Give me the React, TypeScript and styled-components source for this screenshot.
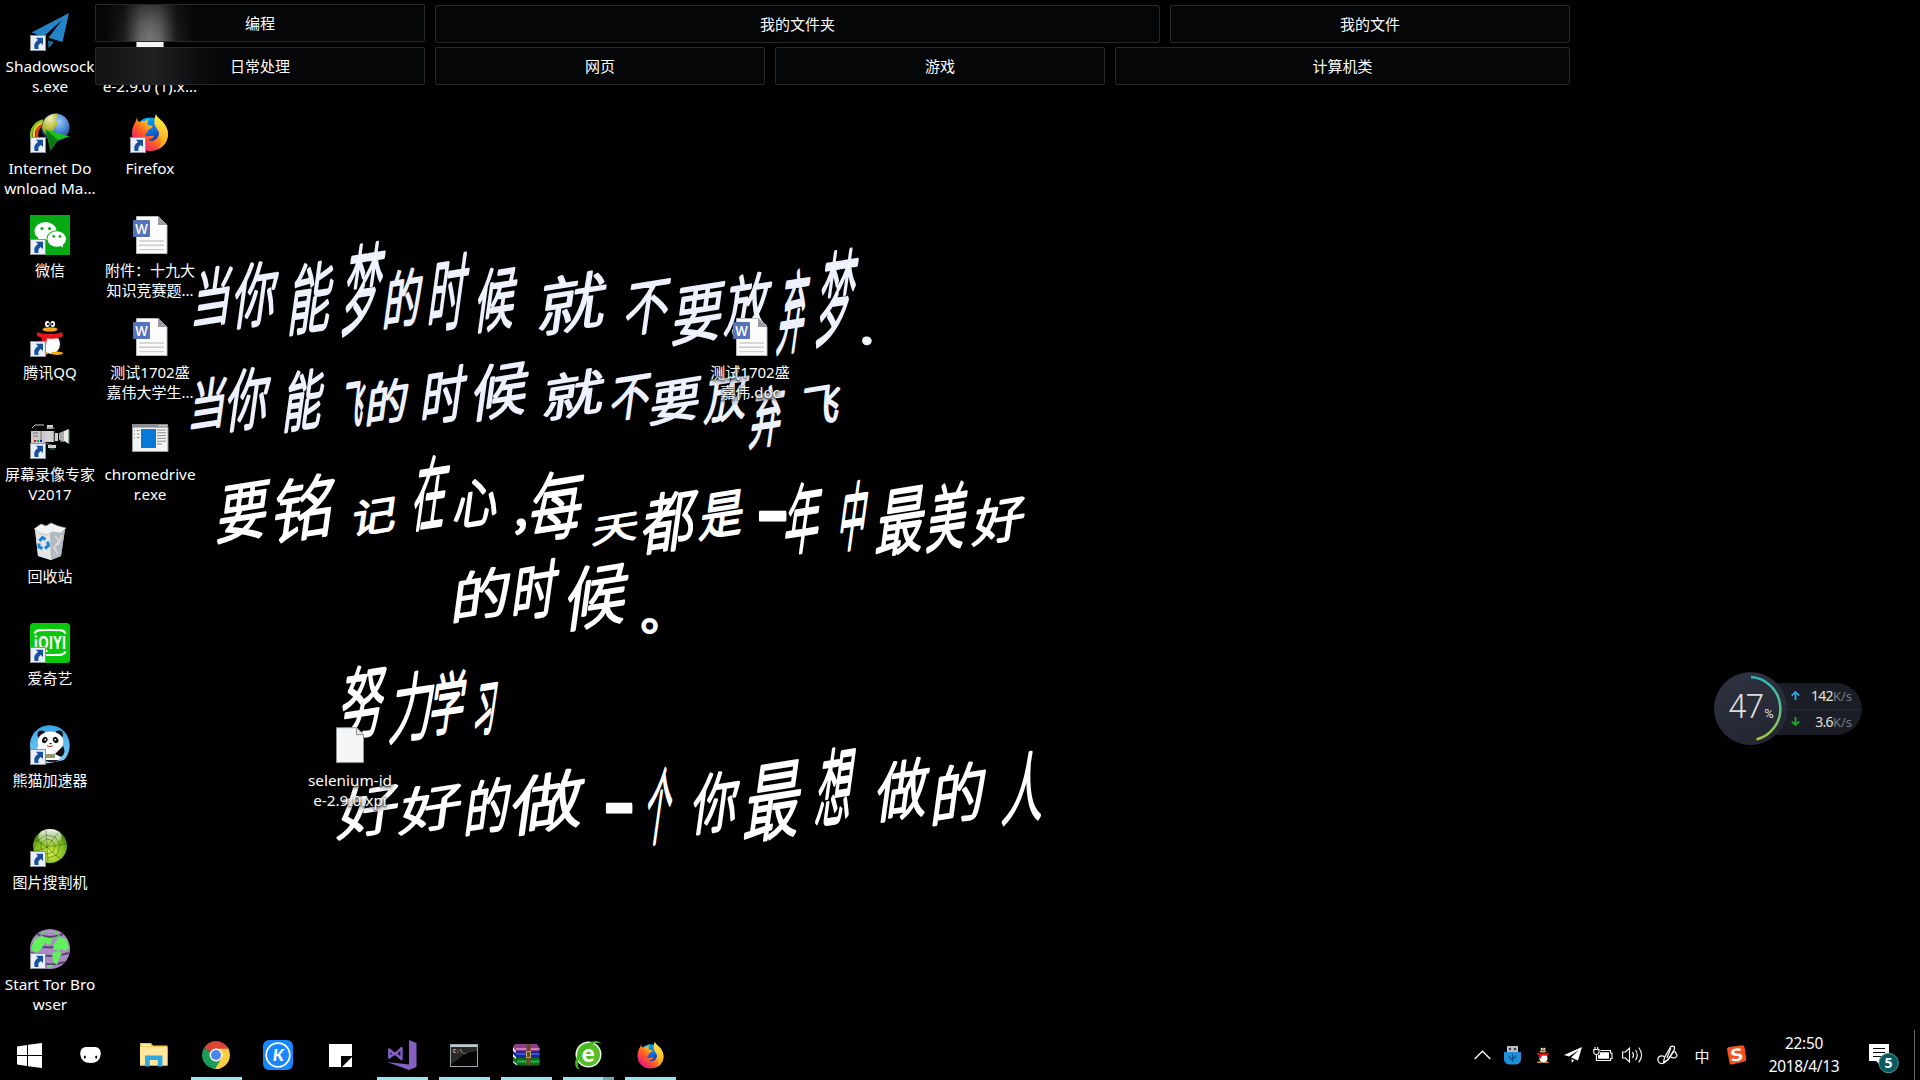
import React from 'react';
import styled, { createGlobalStyle } from 'styled-components';

const UI_FONT = "'Noto Sans', 'Noto Sans CJK SC', sans-serif";

const GlobalStyle = createGlobalStyle`
  html, body { margin: 0; padding: 0; background: #000; overflow: hidden; }
  * { box-sizing: border-box; }
  svg { overflow: visible; }
`;

const Screen = styled.div`
  position: relative;
  display: flex;
  flex-direction: column;
  width: 1920px;
  height: 1080px;
  background: #000;
  color: #fff;
  font-family: ${UI_FONT};
  font-size: 15px;
  overflow: hidden;
`;

/* ---------- wallpaper ---------- */

const WallpaperLayer = styled.svg`
  position: absolute;
  left: 0;
  top: 0;
  font-family: 'Noto Sans CJK SC', sans-serif;
  font-weight: 300;
  font-size: 100px;
`;

// character, left, top, right, bottom
type Glyph = [string, number, number, number, number];

const verses: Glyph[][] = [
  [
    ['当', 193, 263, 234, 329], ['你', 230, 257, 282, 331], ['能', 287, 257, 338, 337], ['梦', 339, 239, 389, 338],
    ['的', 383, 265, 425, 330], ['时', 427, 250, 473, 334], ['候', 473, 263, 521, 335], ['就', 537, 266, 611, 338],
    ['不', 623, 277, 673, 338], ['要', 671, 280, 727, 347], ['放', 723, 269, 775, 337], ['弃', 775, 266, 813, 356],
    ['梦', 813, 246, 862, 349], ['.', 862, 336, 872, 345],
  ],
  [
    ['当', 190, 374, 228, 432], ['你', 223, 363, 274, 434], ['能', 282, 365, 328, 434], ['飞', 340, 380, 368, 429],
    ['的', 366, 375, 410, 427], ['时', 421, 362, 470, 427], ['候', 470, 357, 532, 424], ['就', 542, 364, 608, 423],
    ['不', 609, 372, 653, 423], ['要', 649, 375, 703, 427], ['放', 703, 364, 752, 425], ['弃', 748, 382, 787, 450],
    ['飞', 799, 382, 843, 428],
  ],
  [
    ['要', 216, 478, 272, 545], ['铭', 270, 470, 337, 546], ['记', 351, 493, 399, 538], ['在', 410, 452, 453, 533],
    ['心', 452, 474, 502, 530], [',', 515, 518, 526, 536], ['每', 527, 465, 588, 545], ['天', 592, 510, 640, 547],
    ['都', 639, 485, 700, 557], ['是', 698, 487, 747, 542], ['一', 758, 512, 787, 521], ['年', 782, 478, 826, 557],
    ['中', 837, 478, 871, 553], ['最', 874, 483, 930, 559], ['美', 925, 478, 972, 554], ['好', 971, 491, 1028, 548],
  ],
  [
    ['的', 453, 563, 512, 624], ['时', 512, 556, 562, 623], ['候', 563, 558, 632, 634], ['。', 641, 618, 658, 634],
  ],
  [
    ['努', 337, 660, 390, 743], ['力', 388, 667, 438, 746], ['学', 428, 667, 470, 737], ['习', 473, 682, 499, 737],
  ],
  [
    ['好', 336, 778, 402, 842], ['好', 398, 778, 465, 837], ['的', 465, 774, 513, 837], ['做', 508, 765, 588, 839],
    ['一', 605, 804, 633, 813], ['个', 642, 765, 678, 846], ['你', 689, 767, 743, 837], ['最', 742, 757, 807, 845],
    ['想', 813, 743, 859, 828], ['做', 873, 754, 933, 825], ['的', 932, 758, 988, 827], ['人', 1001, 748, 1051, 827],
  ],
];

const LEAN = 8;
const RISE = 9;
const PEN = 2.6;
const slope = (deg: number) => Math.tan((deg * Math.PI) / 180);
const measurer = document.createElement('canvas').getContext('2d')!;

/** Stretches and slants one character so that its ink fills the given box. */
function penStroke([char, left, top, right, bottom]: Glyph) {
  measurer.font = "300 100px 'Noto Sans CJK SC'";
  const m = measurer.measureText(char);
  const width = right - left;
  const height = bottom - top;
  const flat = height < 20;
  const lean = flat ? 0 : LEAN;
  const rise = flat ? 0 : RISE;
  const h = height - width * slope(rise);
  const w = width - h * slope(lean);
  const inkW = m.actualBoundingBoxRight + m.actualBoundingBoxLeft;
  const inkH = m.actualBoundingBoxAscent + m.actualBoundingBoxDescent;
  const sx = Math.max(w - PEN, 4) / inkW;
  const sy = Math.max(h - PEN, 4) / inkH;
  return {
    transform: `translate(${left + PEN / 2} ${bottom - PEN / 2}) skewY(${-rise}) skewX(${-lean}) scale(${sx} ${sy}) translate(${m.actualBoundingBoxLeft} ${-m.actualBoundingBoxDescent})`,
    strokeWidth: PEN / Math.sqrt(sx * sy),
  };
}

function Wallpaper() {
  return (
    <WallpaperLayer width="1920" height="1080" viewBox="0 0 1920 1080">
      {verses.map((verse, v) => (
        <g key={v} fill="#fff" stroke={v < 2 ? '#edf0fd' : '#fff'} strokeLinejoin="round">
          {verse.map((glyph, i) => (
            <text key={i} {...penStroke(glyph)}>{glyph[0]}</text>
          ))}
        </g>
      ))}
    </WallpaperLayer>
  );
}

/* ---------- shared brand drawings ---------- */

const Firefox = ({ id, size }: { id: string; size: number }) => (
  <svg width={size} height={size} viewBox="0 0 40 40">
    <defs>
      <linearGradient id={`${id}a`} x1="0.9" y1="0.1" x2="0.15" y2="0.9">
        <stop offset="0" stopColor="#fff44f" /><stop offset=".35" stopColor="#ffb81c" />
        <stop offset=".62" stopColor="#ff5a26" /><stop offset="1" stopColor="#e31587" />
      </linearGradient>
      <linearGradient id={`${id}b`} x1="0.2" y1="0" x2="0.7" y2="1">
        <stop offset="0" stopColor="#00b3f4" /><stop offset=".5" stopColor="#0a6fe0" /><stop offset="1" stopColor="#33107c" />
      </linearGradient>
      <linearGradient id={`${id}c`} x1="0" y1="0" x2="0" y2="1">
        <stop offset="0" stopColor="#fff04a" /><stop offset="1" stopColor="#ff9d12" />
      </linearGradient>
    </defs>
    <circle cx="20" cy="19.5" r="15" fill={`url(#${id}b)`} />
    <path d="M7 4C7 7 8 8 9 9C11 8 13 8 15 8C17 6 18 6 19 6C17 8 17 10 18 12L23 13C22 15 20 16 18 17C18 20 16 20 15 22C17 25 21 22 24 23C22 27 17 27 17 26C21 30 29 27 29 20C29 14 25 13 24 10L32 8C36 13 38 16 38 21C38 31 30 38 20 38C10 38 2 31 2 20C2 15 4 11 6 8Z" fill={`url(#${id}a)`} />
    <path d="M26 1C27 5 34 8 36 14C40 23 37 32 28 36C32 31 32 25 29 19C26 14 22 10 26 1Z" fill={`url(#${id}c)`} />
  </svg>
);

const Penguin = ({ size }: { size: number }) => (
  <svg width={size} height={size} viewBox="0 0 40 40">
    <ellipse cx="20" cy="12" rx="9" ry="10" fill="#0a0a0a" />
    <ellipse cx="20" cy="25" rx="12" ry="12" fill="#0a0a0a" />
    <ellipse cx="21" cy="27" rx="9" ry="10" fill="#fff" />
    <ellipse cx="17.3" cy="7" rx="2.3" ry="3" fill="#fff" /><ellipse cx="22.8" cy="7" rx="2.3" ry="3" fill="#fff" />
    <circle cx="18" cy="7.2" r="1.1" fill="#000" /><circle cx="22.2" cy="7.2" r="1.1" fill="#000" />
    <ellipse cx="20" cy="12.4" rx="7.5" ry="2.2" fill="#f6a81a" />
    <path d="M7 15C15 18 25 18 32 15L33 19C29 22 24 22 17 21.5L16 28L11 27L12 21L7 19Z" fill="#e8141c" />
    <ellipse cx="12" cy="36.3" rx="6" ry="1.7" fill="#f6a81a" /><ellipse cx="27" cy="36.3" rx="6" ry="1.7" fill="#f6a81a" />
  </svg>
);

/* ---------- desktop icons ---------- */

const Svg40 = ({ children }: { children: React.ReactNode }) => (
  <svg width="40" height="40" viewBox="0 0 40 40">{children}</svg>
);

const PaperPlaneArt = () => (
  <Svg40>
    <path d="M39 2L1.5 21.5L13 26L32 9L18.5 26.8L32.5 31Z" fill="#2484c6" />
    <path d="M18 29.5L24 31.2L18.6 37Z" fill="#1c6ca6" />
  </Svg40>
);

const DownloadManagerArt = () => (
  <Svg40>
    <defs>
      <radialGradient id="idmGlobe" cx=".6" cy=".3" r=".75">
        <stop offset="0" stopColor="#a9cdfa" /><stop offset=".45" stopColor="#4a86da" /><stop offset="1" stopColor="#0b2658" />
      </radialGradient>
      <radialGradient id="idmLand" cx=".5" cy=".2" r=".9">
        <stop offset="0" stopColor="#f4f0c0" /><stop offset=".5" stopColor="#c2c444" /><stop offset="1" stopColor="#6a8a22" />
      </radialGradient>
    </defs>
    <path d="M13 7.5C4 10 -1 18 2 27" fill="none" stroke="#7fc62b" strokeWidth="2.4" />
    <path d="M13.5 9.5C6 12 2 18 4.5 27" fill="none" stroke="#f5d21d" strokeWidth="2.4" />
    <path d="M14 11.5C9 13 5 18 7.5 27" fill="none" stroke="#e2451c" strokeWidth="2.8" />
    <circle cx="25.5" cy="14.5" r="14" fill="url(#idmGlobe)" />
    <path d="M13 10C15 4 21 .6 27 .8C29 3 26 5 26 8C28 9 28 12 25 14C24 18 19 21 17 22C12 19 11 14 13 10Z" fill="url(#idmLand)" />
    <path d="M15.5 16.5L39.5 23.5L28 27L20.5 37.5Z" fill="#19c219" />
    <path d="M15.5 16.5L28 27L20.5 37.5Z" fill="#0c7a12" />
  </Svg40>
);

const WeChatArt = () => (
  <Svg40>
    <rect width="40" height="40" fill="#06ab13" />
    <ellipse cx="15.5" cy="16" rx="11" ry="9" fill="#fff" />
    <path d="M8 22L8 28L14 24Z" fill="#fff" />
    <ellipse cx="26.7" cy="24" rx="10.2" ry="8.7" fill="#06ab13" />
    <ellipse cx="26.7" cy="24" rx="9.3" ry="7.8" fill="#fff" />
    <path d="M29 30L33 32.5L32.5 28Z" fill="#fff" />
    <circle cx="12" cy="13.5" r="1.6" fill="#06ab13" /><circle cx="19.6" cy="13.5" r="1.6" fill="#06ab13" />
    <circle cx="23.7" cy="21.4" r="1.3" fill="#06ab13" /><circle cx="30" cy="21.4" r="1.3" fill="#06ab13" />
  </Svg40>
);

const CameraArt = () => (
  <Svg40>
    <path d="M2 9L5 6H14" fill="none" stroke="#ccc" strokeWidth="1" />
    <path d="M1 12H15V27H1Z" fill="#c9c9c9" /><path d="M3 14H8M3 17H8M11 12V22" stroke="#777" strokeWidth="1" />
    <rect x="4" y="21" width="2" height="2" fill="#e00" /><rect x="7" y="21" width="2" height="2" fill="#0b0" /><rect x="10" y="21" width="2" height="2" fill="#11f" />
    <path d="M17 6H23V10H17ZM15 12H24V23H15ZM18 26H26V29H18ZM25 14H28V22H25Z" fill="#d2d2d2" />
    <path d="M16 9L25 9M15 24L22 26M24 12L24 23" stroke="#777" strokeWidth="1" />
    <path d="M29 14L34 12V23L29 21Z" fill="#aaa" /><path d="M34 12L39 10V25L34 22Z" fill="#e9e9e9" />
    <path d="M30 22L33 23M20 30H25M39 11V25" stroke="#3f7f46" strokeWidth="1" />
  </Svg40>
);

const RecycleBinArt = () => (
  <Svg40>
    <path d="M5 8L35 8L31 35L21 39L8 35Z" fill="#c9cdd1" />
    <path d="M5 8L20 12L21 39L8 35Z" fill="#e2e5e8" /><path d="M35 8L20 12L21 39L31 35Z" fill="#b5babf" />
    <path d="M4 8L11 3L16 5L21 2L28 5L36 7L31 12L22 11L17 14L10 12Z" fill="#f2f3f4" stroke="#a6abb0" strokeWidth=".6" />
    <path d="M25 15L29 20L24 27L28 33M32 14L28 24" stroke="#d9dcdf" strokeWidth="1.6" fill="none" />
    <g fill="none" stroke="#1b83d6" strokeWidth="3">
      <path d="M9.5 20L12.5 16.5L15.5 18.5" /><path d="M17.5 20.5L18.5 24.5L15 27.5" /><path d="M12.5 27.5L9 26L9 22.5" />
    </g>
  </Svg40>
);

const IqiyiArt = () => (
  <Svg40>
    <rect width="40" height="40" rx="3.5" fill="#09c80c" />
    <path d="M4.5 10.5C6 7 8 7 20 7S34 7 35.5 10.5M4.5 28.5C6 32 8 32 20 32S34 32 35.5 28.5" fill="none" stroke="#fff" strokeWidth="2.2" />
    <text x="3.8" y="25.5" textLength="32.5" lengthAdjust="spacingAndGlyphs" fill="#fff" fontFamily="'Open Sans', sans-serif" fontWeight="700" fontSize="17">iQIYI</text>
  </Svg40>
);

const PandaArt = () => (
  <Svg40>
    <defs>
      <linearGradient id="pandaSky" x1="0" y1="0" x2="0" y2="1"><stop offset="0" stopColor="#3aa4e8" /><stop offset="1" stopColor="#7ed1fa" /></linearGradient>
    </defs>
    <path d="M34 35C43 25 41 10 30 3C16 -5 0 5 0 20C0 32 10 40 20 38Z" fill="url(#pandaSky)" />
    <ellipse cx="20" cy="26" rx="13" ry="11.5" fill="#fff" />
    <circle cx="11.5" cy="9.5" r="4" fill="#111" /><circle cx="29" cy="9.5" r="4" fill="#111" />
    <ellipse cx="20.5" cy="17" rx="12.8" ry="10.5" fill="#fff" />
    <ellipse cx="14.8" cy="15" rx="2.6" ry="3.3" fill="#111" transform="rotate(30 14.8 15)" /><ellipse cx="25.6" cy="15" rx="2.6" ry="3.3" fill="#111" transform="rotate(-30 25.6 15)" />
    <circle cx="15.3" cy="14.6" r=".9" fill="#fff" /><circle cx="25.2" cy="14.6" r=".9" fill="#fff" />
    <path d="M19 18H22L20.5 19.5Z" fill="#111" /><path d="M17 20.5Q20 23 23 20.5" stroke="#d22" fill="none" />
    <path d="M25 29L33 21Q37 28 31 32Z" fill="#111" /><path d="M16 29H25V33H16Z" fill="#8d9a72" /><path d="M18 30h2v2h-2z" fill="#e0803a" /><path d="M14 35Q22 40 29 35Z" fill="#222" />
  </Svg40>
);

const WebBallArt = () => (
  <Svg40>
    <defs>
      <radialGradient id="webBall" cx=".5" cy=".7" r=".6"><stop offset="0" stopColor="#d6ee48" /><stop offset=".7" stopColor="#80bb1e" /><stop offset="1" stopColor="#4a8a14" /></radialGradient>
      <linearGradient id="webShine" x1="0" y1="0" x2="0" y2="1"><stop offset="0" stopColor="#fff" stopOpacity=".95" /><stop offset="1" stopColor="#fff" stopOpacity=".15" /></linearGradient>
    </defs>
    <circle cx="20" cy="19" r="17" fill="url(#webBall)" />
    <ellipse cx="20" cy="9.5" rx="11.5" ry="7.5" fill="url(#webShine)" />
    <path d="M17 20L4 12M17 20L16 3M17 20L28 6M17 20L36 17M17 20L30 32M17 20L18 35M17 20L4 25M11 16L16.5 12L22 13.5L25 18.5L23 25L17 27L11 22ZM7 14L16 8L25 10L30 18L27 28L17.5 31" fill="none" stroke="#26400c" strokeWidth=".7" strokeOpacity=".6" />
  </Svg40>
);

const TorArt = () => (
  <Svg40>
    <circle cx="20" cy="20" r="20" fill="#a88bc0" />
    <path d="M7 5Q20 11 33 5M2 15Q20 22 38 15M1 24Q20 30 39 24M5 33Q20 38 35 33" stroke="#604077" strokeWidth="2" fill="none" />
    <ellipse cx="20" cy="6" rx="9" ry="3.5" fill="none" stroke="#5be45e" strokeWidth="1.2" />
    <path d="M5 10L12 7L17 9L22 9L21 14L18 16L15 13L12 19L9 22L6 24L2 21L2 16Z" fill="#63f05f" />
    <path d="M24 15L29 8L36 10L39 18L36 22L32 20L29 22L23 20Z" fill="#63f05f" />
    <path d="M22 24L29 22L32 25L29 29L27 36L23 33Z" fill="#63f05f" />
    <path d="M16 36H24L20 39Z" fill="#63f05f" />
  </Svg40>
);

const WordDocArt = () => (
  <Svg40>
    <path d="M6.5 1.5H28L37 10V38.5H6.5Z" fill="#fcfcfd" stroke="#b8b8bb" />
    <path d="M28 1L37.4 10H28Z" fill="#9b9ca3" />
    <path d="M9 26H34M9 30.3H34M9 34.6H34" stroke="#cbcccd" strokeWidth="1.4" />
    <rect x="3" y="5" width="17" height="17" rx="1" fill="#5672b8" />
    <text x="11.5" y="18.5" textAnchor="middle" textLength="12.5" lengthAdjust="spacingAndGlyphs" fontFamily="'Open Sans', sans-serif" fontWeight="600" fontSize="14" fill="#fff">W</text>
  </Svg40>
);

const ExeArt = () => (
  <Svg40>
    <rect x="2" y="5" width="36" height="28" fill="#f4f4f4" /><rect x="2" y="5" width="36" height="3.6" fill="#8b8d90" />
    <path d="M29 6.7h2M32.3 6.7h2M35.4 6.7h1.6" stroke="#fff" />
    <rect x="11" y="10" width="15" height="19" fill="#0a78d7" />
    <path d="M4 11.5h1M7 11.5h2.5M4 15h1M7 15h2.5M4 18.5h1M7 18.5h2.5" stroke="#888" />
    <path d="M27 11h9M27 13.8h9M27 16.6h9M27 19.4h9M27 22.2h9M27 25h5" stroke="#8a8a8a" />
    <path d="M2 32.5H38V8M2.5 8V32.5" fill="none" stroke="#9a9a9a" />
  </Svg40>
);

const BlankFileArt = () => (
  <Svg40>
    <path d="M6.5 2.7H26.5L33.5 9.7V37.6H6.5Z" fill="#f3f5f7" stroke="#8f9194" />
    <path d="M26.5 2.7V9.7H33.5" fill="#e2e4e6" stroke="#8f9194" />
  </Svg40>
);

const ShortcutBadge = () => (
  <svg width="16" height="16" viewBox="0 0 16 16">
    <rect x=".5" y=".5" width="15" height="15" fill="#e9effa" stroke="#8d9094" />
    <path d="M5.8 2.8H13V10L10.8 8Q7.3 10 8.6 14H4.6Q3 8 8 5Z" fill="#174f9b" />
  </svg>
);

const IconGrid = styled.main`
  position: relative;
  display: grid;
  grid-template-columns: repeat(19, 100px);
  grid-template-rows: repeat(10, 102px);
  height: 1030px;
`;

const IconCell = styled.div<{ $col: number; $row: number }>`
  grid-column: ${(p) => p.$col + 1};
  grid-row: ${(p) => p.$row + 1};
  display: flex;
  flex-direction: column;
  align-items: center;
  padding-top: 11px;
`;

const IconArt = styled.div`
  position: relative;
  width: 40px;
  height: 40px;
  svg { display: block; }
`;

const BadgeSpot = styled.div`
  position: absolute;
  left: 0;
  bottom: 0;
`;

const IconLabel = styled.div`
  margin-top: 5px;
  font-size: 15px;
  line-height: 20px;
  text-align: center;
  white-space: pre;
  text-shadow: 0 1px 2px #000, 1px 2px 4px rgba(0, 0, 0, 0.9);
`;

const LatinLabel = styled(IconLabel)`
  font-size: 15.3px;
`;

type DesktopItem = { col: number; row: number; label: string; art: React.ReactNode; shortcut?: boolean };

const desktopItems: DesktopItem[] = [
  { col: 0, row: 0, label: 'Shadowsock\ns.exe', art: <PaperPlaneArt />, shortcut: true },
  { col: 0, row: 1, label: 'Internet Do\nwnload Ma...', art: <DownloadManagerArt />, shortcut: true },
  { col: 0, row: 2, label: '微信', art: <WeChatArt />, shortcut: true },
  { col: 0, row: 3, label: '腾讯QQ', art: <Penguin size={40} />, shortcut: true },
  { col: 0, row: 4, label: '屏幕录像专家\nV2017', art: <CameraArt />, shortcut: true },
  { col: 0, row: 5, label: '回收站', art: <RecycleBinArt /> },
  { col: 0, row: 6, label: '爱奇艺', art: <IqiyiArt />, shortcut: true },
  { col: 0, row: 7, label: '熊猫加速器', art: <PandaArt />, shortcut: true },
  { col: 0, row: 8, label: '图片搜割机', art: <WebBallArt />, shortcut: true },
  { col: 0, row: 9, label: 'Start Tor Bro\nwser', art: <TorArt />, shortcut: true },
  { col: 1, row: 0, label: 'selenium-id\ne-2.9.0 (1).x...', art: <BlankFileArt /> },
  { col: 1, row: 1, label: 'Firefox', art: <Firefox id="ffDesk" size={40} />, shortcut: true },
  { col: 1, row: 2, label: '附件：十九大\n知识竞赛题...', art: <WordDocArt /> },
  { col: 1, row: 3, label: '测试1702盛\n嘉伟大学生...', art: <WordDocArt /> },
  { col: 1, row: 4, label: 'chromedrive\nr.exe', art: <ExeArt /> },
  { col: 7, row: 3, label: '测试1702盛\n嘉伟.doc', art: <WordDocArt /> },
  { col: 3, row: 7, label: 'selenium-id\ne-2.9.0.xpi', art: <BlankFileArt /> },
];

const hasHan = (text: string) => /[\u4e00-\u9fff]/.test(text);

/* ---------- rolled-up folders along the top ---------- */

const FenceDock = styled.nav`
  position: absolute;
  left: 95px;
  top: 4px;
  display: flex;
  flex-direction: column;
  gap: 4px;
  width: 1475px;
`;

const FenceRow = styled.div`
  display: flex;
  gap: 10px;
  height: 39px;
`;

const Fence = styled.div<{ $width: number; $glow?: string; $drop?: number }>`
  display: flex;
  align-items: center;
  justify-content: center;
  width: ${(p) => p.$width}px;
  height: 38px;
  margin-top: ${(p) => p.$drop ?? 0}px;
  border: 1px solid #29292b;
  border-radius: 2px;
  background: ${(p) => (p.$glow ? `${p.$glow}, ` : '')}#050608;
  line-height: 20px;
  text-shadow: 0 1px 3px #000;
`;

const fileGlow =
  'linear-gradient(180deg, rgba(5,6,8,.55), rgba(5,6,8,.2) 50%, transparent), linear-gradient(90deg, transparent 10px, rgba(70,70,72,.35) 28px, #68696b 44px, #77787a 54px, #68696b 64px, rgba(70,70,72,.35) 80px, transparent 98px)';
const labelGlow = 'linear-gradient(90deg, #111213 0, #1f2021 55px, #18191a 75px, #0c0d0e 100px, #050608 125px)';

/* ---------- speed meter ---------- */

const Meter = styled.aside`
  position: absolute;
  left: 1714px;
  top: 672px;
  display: flex;
  align-items: center;
`;

const MeterDial = styled.div`
  position: relative;
  z-index: 1;
  display: flex;
  align-items: center;
  justify-content: center;
  width: 73px;
  height: 73px;
  border-radius: 50%;
  background: linear-gradient(160deg, #2f3342, #22252f);
  border: 1px solid #2c303c;
  color: #dcdcdc;
`;

const DialArc = styled.svg`
  position: absolute;
  inset: -1px;
`;

const DialNumber = styled.span`
  font: 300 33px/36px Roboto, sans-serif;
  letter-spacing: -0.8px;
  margin: -4px 0 0 1px;
`;

const DialUnit = styled.span`
  font: 13px/14px Roboto, sans-serif;
  padding-top: 10px;
  margin-left: 1px;
`;

const MeterRates = styled.div`
  display: flex;
  flex-direction: column;
  width: 104px;
  height: 52px;
  margin-left: -29px;
  padding-left: 28px;
  border-radius: 0 26px 26px 0;
  background: #1a1d26;
`;

const Rate = styled.div`
  display: flex;
  align-items: center;
  justify-content: space-between;
  height: 26px;
  padding: 1px 10px 0 0;
  font: 14px/25px 'Noto Sans', sans-serif;
  letter-spacing: -0.7px;
  color: #e6e0da;
  & + & { border-top: 1px solid #262932; padding-top: 0; }
  svg { margin: -2px 0 0 5px; }
`;

const RateUnit = styled.span`
  color: #777a83;
  letter-spacing: 0;
  font-size: 13px;
`;

/* ---------- taskbar ---------- */

const Taskbar = styled.footer`
  position: relative;
  display: flex;
  justify-content: space-between;
  height: 50px;
  background: #000;
`;

const TaskGroup = styled.div`
  display: flex;
`;

const TaskButton = styled.div<{ $width: number; $open?: boolean; $stacked?: boolean }>`
  display: flex;
  flex-direction: column;
  align-items: center;
  justify-content: center;
  width: ${(p) => p.$width}px;
  height: 50px;
  padding-top: 3px;
  &::after {
    content: '';
    width: 51px;
    height: 3px;
    margin-top: auto;
    background: ${(p) => (!p.$open ? 'transparent' : p.$stacked ? 'linear-gradient(90deg, #9ce3f1 40px, #76a8b3 40px)' : '#9ce3f1')};
  }
  svg { display: block; margin-top: auto; }
`;

const Tray = styled.div`
  display: flex;
  align-items: center;
  width: 451px;
`;

const TraySlot = styled.div<{ $width: number }>`
  display: flex;
  align-items: center;
  justify-content: center;
  width: ${(p) => p.$width}px;
  height: 50px;
`;

const Clock = styled.div`
  width: 96px;
  font-size: 15.4px;
  line-height: 23px;
  text-align: center;
  padding-bottom: 1px;
  letter-spacing: -0.3px;
`;

const ActionCenter = styled.div`
  display: flex;
  align-items: center;
  justify-content: center;
  width: 62px;
  height: 50px;
  padding: 6px 0 0 2px;
`;

const ShowDesktop = styled.div`
  width: 6px;
  height: 50px;
  border-left: 1px solid #6a6a6a;
`;

const WindowsArt = () => (
  <svg width="25" height="25" viewBox="0 0 25 25"><path d="M0 3.5L10 2V12H0ZM11 1.8L25 0V12H11ZM0 13H10V23L0 21.5ZM11 13H25V25L11 23.2Z" fill="#fff" /></svg>
);
const CortanaArt = () => (
  <svg width="21" height="16" viewBox="0 0 21 16"><path d="M5.5 0H15.5Q21 1 20.8 7Q20 16 10.5 16T.2 7Q0 1 5.5 0Z" fill="#fff" /><ellipse cx="4.8" cy="10" rx="1" ry="1.5" /><ellipse cx="16.2" cy="10" rx="1" ry="1.5" /></svg>
);
const ExplorerArt = () => (
  <svg width="28" height="24" viewBox="0 0 28 24">
    <path d="M0 0H11L13 2.5H27.5V22.5H0Z" fill="#f5c84b" /><path d="M0 4H27.5V22.5H0Z" fill="#ffe79b" /><rect x="2" y="1.5" width="8" height="1.6" fill="#fff" />
    <path d="M5 12.5H22.5V23.5H17.8V17H9.8V23.5H5Z" fill="#30a9e0" />
  </svg>
);
const ChromeArt = () => (
  <svg width="28" height="28" viewBox="0 0 28 28">
    <path d="M14 14L1.9 7A14 14 0 0 1 26.1 7Z" fill="#dc4437" /><path d="M14 14L26.1 7A14 14 0 0 1 14 28Z" fill="#fccd3f" /><path d="M14 14L14 28A14 14 0 0 1 1.9 7Z" fill="#1d9c58" />
    <path d="M14 7.5H26.3L20 17Z" fill="#fccd3f" /><path d="M14 7.5H26.3L25.6 6H6Z" fill="#dc4437" /><path d="M8.4 17.3L14 20.5L19.6 17.3L13.4 28H11Z" fill="#1d9c58" /><path d="M19.6 17.3L13.2 28H17L22 25Z" fill="#fccd3f" />
    <circle cx="14" cy="14" r="6.5" fill="#f5f5f5" /><circle cx="14" cy="14" r="5" fill="#4a86ee" />
  </svg>
);
const KugouArt = () => (
  <svg width="30" height="30" viewBox="0 0 30 30"><rect width="30" height="30" rx="6" fill="#1987fc" /><circle cx="15" cy="15" r="11.8" fill="none" stroke="#fff" strokeWidth="1.7" /><text x="15.4" y="21" textAnchor="middle" fontFamily="Lato, sans-serif" fontWeight="900" fontStyle="italic" fontSize="17" fill="#fff">K</text></svg>
);
const StickyArt = () => (
  <svg width="23" height="23" viewBox="0 0 23 23"><path d="M0 0H23V12H12V23H0Z" fill="#fff" /><path d="M23 13V23H13Z" fill="#fff" /></svg>
);
const VisualStudioArt = () => (
  <svg width="30" height="30" viewBox="0 0 30 30">
    <path d="M22 0L29.5 3V27L22 30L0 22L22 24.5Z" fill="#865fc5" />
    <path d="M2.3 9.5L8 14.5L14.5 8V19L8 13L2.3 17.5Z" fill="none" stroke="#865fc5" strokeWidth="2.4" strokeLinejoin="round" />
  </svg>
);
const ConsoleArt = () => (
  <svg width="28" height="23" viewBox="0 0 28 23"><rect x=".5" y=".5" width="27" height="22" fill="#050505" stroke="#9aa6ad" /><rect x="1" y="1" width="26" height="2" fill="#c2c9cd" /><path d="M1 3H27V7Q12 9 8 16L1 20Z" fill="#292929" /><text x="3" y="8.8" fontFamily="'Liberation Mono', monospace" fontSize="5.5" fill="#eee">C:\_</text></svg>
);
const WinRarArt = () => (
  <svg width="27" height="22" viewBox="0 0 27 22">
    <path d="M2 0H24L26.5 4V7H3L0 3Z" fill="#8d3f86" /><path d="M3 4H26.5V6H3Z" fill="#cd78c4" />
    <path d="M0 7H26.5V14H3L0 11Z" fill="#1b2a94" /><path d="M3 9H26.5V11H3Z" fill="#3c52d8" />
    <path d="M0 14H26.5V21.5H4L0 18Z" fill="#0e6c1d" /><path d="M4 16.5H26.5V18.5H4Z" fill="#27b53c" />
    <path d="M0 3L3 7V9L0 7ZM0 10L3 13V15L0 13ZM0 17L4 20V21.5L0 18.5Z" fill="#e8e8e8" /><rect x="13.5" y="0" width="4" height="21.5" fill="#6d4524" /><rect x="13.5" y="7.5" width="4" height="6" fill="none" stroke="#c7a45c" strokeWidth="1" />
  </svg>
);
const GreenBrowserArt = () => (
  <svg width="30" height="30" viewBox="0 0 30 30">
    <circle cx="15.5" cy="14.5" r="13" fill="#f1fbe9" /><circle cx="15.5" cy="14.5" r="11.5" fill="#55bd2a" />
    <text x="15.3" y="21.5" textAnchor="middle" fontFamily="Lato, sans-serif" fontWeight="900" fontSize="24" fill="#fff">e</text>
    <path d="M28 4C26 -2 14 1 7 11C1 20 0 28 7 29.5C2 25 6 17 11 11C18 4 24 1 28 4Z" fill="#43b81d" />
  </svg>
);

const taskButtons = [
  { art: <WindowsArt />, width: 59 },
  { art: <CortanaArt />, width: 63 },
  { art: <ExplorerArt />, width: 63 },
  { art: <ChromeArt />, width: 62, open: true },
  { art: <KugouArt />, width: 62 },
  { art: <StickyArt />, width: 62 },
  { art: <VisualStudioArt />, width: 62, open: true },
  { art: <ConsoleArt />, width: 62, open: true },
  { art: <WinRarArt />, width: 62, open: true },
  { art: <GreenBrowserArt />, width: 62, open: true, stacked: true },
  { art: <Firefox id="ffTask" size={29} />, width: 62, open: true },
];

const trayItems = [
  { width: 27, art: <svg width="17" height="10" viewBox="0 0 17 10"><path d="M.7 9L8.5 1.2L16.3 9" fill="none" stroke="#fff" strokeWidth="1.3" /></svg> },
  { width: 32, art: <svg width="17" height="19" viewBox="0 0 17 19"><rect x="3" y="0" width="11" height="7" fill="#b4bcc2" /><rect x="5" y="2" width="2" height="2" fill="#333" /><rect x="10" y="2" width="2" height="2" fill="#333" /><path d="M0 6H17V14Q16 18 12 18.5H5Q1 18 0 14Z" fill="#1e8fd8" /><path d="M8.5 16V8M8.5 14L5.5 12V10M8.5 13L11.5 11V9.5" fill="none" stroke="#0a4d86" strokeWidth="1.2" /></svg> },
  { width: 29, art: <Penguin size={18} /> },
  { width: 32, art: <svg width="18" height="16" viewBox="0 0 18 16"><path d="M18 0L0 8L5 9.5L15 3L7 10.5L14 13.5ZM7.5 12L10 13.3L7.8 16Z" fill="#fff" /></svg> },
  { width: 28, art: <svg width="20" height="16" viewBox="0 0 20 16"><path d="M.8 2.5H6V5.5Q5.5 7.5 3.4 7.5Q1 7.5 .8 5.5ZM2 0V2.5M4.7 0V2.5M3.4 7.5V13.5H17.5V11.5H19V6H17.5V3.5H7.5" fill="none" stroke="#fff" strokeWidth="1.1" /><path d="M7 5.2H16V11.8H5V8.5L7 7.5Z" fill="#fff" /></svg> },
  { width: 31, art: <svg width="21" height="18" viewBox="0 0 21 18" fill="none" stroke="#fff" strokeWidth="1.1"><path d="M.6 6H3.5L7.5 2V16L3.5 12H.6Z" /><path d="M10.5 6Q12.5 9 10.5 12M13.5 4Q17 9 13.5 14M16.7 1.5Q22.5 9 16.7 16.5" /></svg> },
  { width: 39, art: <svg width="21" height="20" viewBox="0 0 21 20" fill="none" stroke="#fff" strokeWidth="1.2"><path d="M6.5 17.5L7.5 12.5L13.5 2Q15.5 0 17.5 2L17.3 4.5L11 14.5Z" /><path d="M13.8 3L10 13" /><path d="M7.5 11.5Q2 9.5 .8 14Q1 19 5.5 18.5Q10 17 14 10.5T19 8.5Q21.5 10.5 18 13Q15 13 12.5 11.5" /></svg> },
  { width: 30, art: '中' },
  { width: 39, art: <svg width="21" height="20" viewBox="0 0 21 20"><path d="M1 4Q1 2.5 3 2L16 .2Q18 0 18.5 2L20.3 14Q20.5 16 18.5 16.5L6 19.5Q4 20 3.5 18Z" fill="#f4511e" /><text x="10.6" y="16" textAnchor="middle" transform="rotate(-8 10 10)" fontFamily="Lato, sans-serif" fontWeight="900" fontSize="17" textLength="12.5" lengthAdjust="spacingAndGlyphs" fill="#fff">S</text></svg> },
];

export default function App() {
  return (
    <Screen>
      <GlobalStyle />
      <Wallpaper />
      <IconGrid>
        {desktopItems.map((item) => {
          const Label = hasHan(item.label) ? IconLabel : LatinLabel;
          return (
            <IconCell key={`${item.col}-${item.row}`} $col={item.col} $row={item.row}>
              <IconArt>
                {item.art}
                {item.shortcut && <BadgeSpot><ShortcutBadge /></BadgeSpot>}
              </IconArt>
              <Label>{item.label}</Label>
            </IconCell>
          );
        })}
      </IconGrid>

      <FenceDock>
        <FenceRow>
          <Fence $width={330} $glow={fileGlow}>编程</Fence>
          <Fence $width={725} $drop={1}>我的文件夹</Fence>
          <Fence $width={400} $drop={1}>我的文件</Fence>
        </FenceRow>
        <FenceRow>
          <Fence $width={330} $glow={labelGlow}>日常处理</Fence>
          <Fence $width={330}>网页</Fence>
          <Fence $width={330}>游戏</Fence>
          <Fence $width={455}>计算机类</Fence>
        </FenceRow>
      </FenceDock>

      <Meter>
        <MeterDial>
          <DialArc width="73" height="73" viewBox="0 0 73 73">
            <defs>
              <linearGradient id="dialArc" x1="0" y1="0" x2="0" y2="1"><stop offset="0" stopColor="#2cb7b7" /><stop offset=".5" stopColor="#5cc68a" /><stop offset="1" stopColor="#a6c53f" /></linearGradient>
            </defs>
            <path d="M37 5A31.8 31.8 0 0 1 42.5 67.5" fill="none" stroke="url(#dialArc)" strokeWidth="2.4" />
          </DialArc>
          <DialNumber>47</DialNumber>
          <DialUnit>%</DialUnit>
        </MeterDial>
        <MeterRates>
          <Rate>
            <svg width="9" height="9" viewBox="0 0 9 9"><path d="M.7 4.6L4.5 1L8.3 4.6M4.5 1.5V9" fill="none" stroke="#2d9fdd" strokeWidth="1.9" /></svg>
            <span>142<RateUnit>K/s</RateUnit></span>
          </Rate>
          <Rate>
            <svg width="9" height="9" viewBox="0 0 9 9"><path d="M.7 4.4L4.5 8L8.3 4.4M4.5 7.5V0" fill="none" stroke="#1fa32c" strokeWidth="1.9" /></svg>
            <span>3.6<RateUnit>K/s</RateUnit></span>
          </Rate>
        </MeterRates>
      </Meter>

      <Taskbar>
        <TaskGroup>
          {taskButtons.map((button, i) => (
            <TaskButton key={i} $width={button.width} $open={button.open} $stacked={button.stacked}>{button.art}</TaskButton>
          ))}
        </TaskGroup>
        <Tray>
          {trayItems.map((item, i) => (
            <TraySlot key={i} $width={item.width}>{item.art}</TraySlot>
          ))}
          <Clock>22:50<br />2018/4/13</Clock>
          <ActionCenter>
            <svg width="31" height="31" viewBox="0 0 31 31">
              <path d="M0 1H20V18H11V22L7 18H0Z" fill="#fff" /><path d="M4 5.5H16M4 9.5H16M4 13.5H12" stroke="#000" strokeWidth="1.2" />
              <circle cx="19.6" cy="20" r="9.7" fill="#075b60" stroke="#5b9699" />
              <text x="19.6" y="25" textAnchor="middle" fontFamily="'Noto Sans', sans-serif" fontWeight="700" fontSize="14" fill="#fff">5</text>
            </svg>
          </ActionCenter>
          <ShowDesktop />
        </Tray>
      </Taskbar>
    </Screen>
  );
}
